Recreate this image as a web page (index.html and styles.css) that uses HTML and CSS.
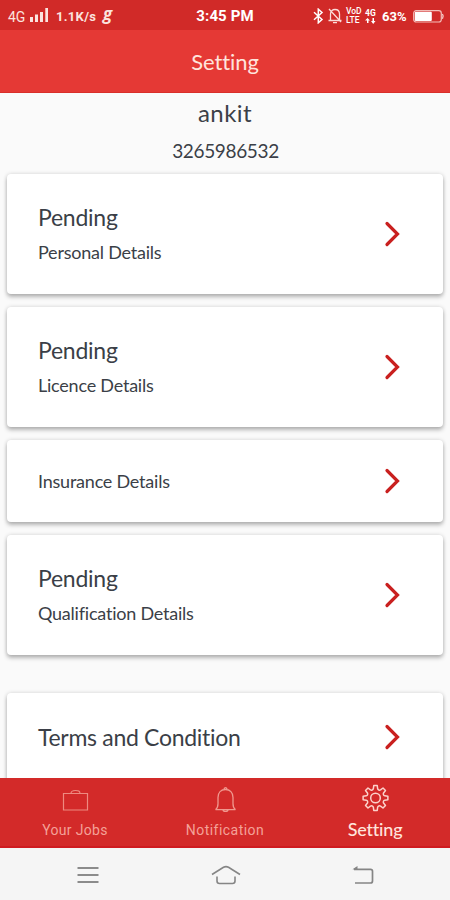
FILE: index.html
```html
<!DOCTYPE html>
<html lang="en">
<head>
<meta charset="utf-8">
<title>Setting</title>
<link rel="stylesheet" href="styles.css">
</head>
<body>
<div class="screen">
  <div class="status">
    <div class="status-left">
      <span class="net">4G</span>
      <svg class="bars" width="19" height="15" viewBox="0 0 19 15" fill="#fbe3df"><path d="M0 9h3v5H0zM5 6.500h3V14H5zM10 4h3v10h-3zM15.300 0h2.700v14h-2.700z"/></svg>
      <span class="speed">1.1K/s</span>
      <span class="g">g</span>
    </div>
    <div class="time">3:45 PM</div>
    <div class="status-right">
      <svg class="bt" width="11" height="16" viewBox="0 0 11 16" fill="none" stroke="#fff" stroke-width="1.500"><path d="M1 4.300l8 7.200-3.700 3.300V1.200L9 4.500l-8 7.200"/></svg>
      <svg class="mute" width="14" height="16" viewBox="0 0 14 16" fill="none" stroke="#fbdcd8" stroke-width="1.300"><path d="M2.500 12V6c0-3 2-4.500 4.500-4.500S11.500 3 11.500 6v6M.5 12.500h13M5 14.700h4M1 1l12 13"/></svg>
      <span class="stack volte"><span>VoD</span><span>LTE</span></span>
      <span class="stack data"><span>4G</span><svg width="11" height="6" viewBox="0 0 11 6" fill="#fff"><path d="M0 2.500L2.500 0 5 2.500H3.500V5H2V2.500zM6 3h1.500V0H9v3h1.500L8.200 6z"/></svg></span>
      <span class="pct">63%</span>
      <svg width="32" height="13" viewBox="0 0 32 13" fill="none"><rect x=".7" y=".7" width="27.600" height="11.300" rx="2.500" stroke="#f3bdb8" stroke-width="1.200"/><path d="M29.500 4q1.500 2.400 0 4.800" stroke="#fbdcd8" stroke-width="1.200"/><rect x="1.800" y="1.800" width="17" height="9.200" rx="1" fill="#fff"/></svg>
    </div>
  </div>
  <header class="header">Setting</header>
  <main class="content">
    <div class="name">ankit</div>
    <div class="phone">3265986532</div>
    <section class="cards">
      <div class="card"><div><div class="title">Pending</div><div class="sub">Personal Details</div></div><svg class="chev" viewBox="0 0 16 26"><path d="M3 2.500l10.500 10.500L3 23.500"/></svg></div>
      <div class="card"><div><div class="title">Pending</div><div class="sub">Licence Details</div></div><svg class="chev" viewBox="0 0 16 26"><path d="M3 2.500l10.500 10.500L3 23.500"/></svg></div>
      <div class="card short"><div class="sub">Insurance Details</div><svg class="chev" viewBox="0 0 16 26"><path d="M3 2.500l10.500 10.500L3 23.500"/></svg></div>
      <div class="card"><div><div class="title">Pending</div><div class="sub">Qualification Details</div></div><svg class="chev" viewBox="0 0 16 26"><path d="M3 2.500l10.500 10.500L3 23.500"/></svg></div>
      <div class="card terms"><div class="title wide">Terms and Condition</div><svg class="chev" viewBox="0 0 16 26"><path d="M3 2.500l10.500 10.500L3 23.500"/></svg></div>
    </section>
  </main>
  <nav class="tabs">
    <div class="tab">
      <svg width="28" height="28" viewBox="-14 -14 28 28" fill="none" stroke="#ee8a80" stroke-width="1.200"><path d="M-11.500-4.500h24v16.500h-24zM-4-4.500c0-2.500 1.500-3 4.500-3s4.500 .5 4.500 3"/></svg>
      <span>Your Jobs</span>
    </div>
    <div class="tab">
      <svg width="28" height="28" viewBox="-14 -14 28 28" fill="none" stroke="#f0988e" stroke-width="1.300"><g transform="translate(.5 1.500)"><path d="M-10 10.200h20M-10 10.200c2-1.500 2.500-3 2.500-6V-2c0-5 3-8 7.500-8s7.500 3 7.500 8v6.200c0 3 .5 4.500 2.500 6M-1.500-10c0-2.500 3-2.500 3 0M-2.500 10.500c.5 2 4.500 2 5 0"/></g></svg>
      <span class="notif">Notification</span>
    </div>
    <div class="tab active">
      <svg width="28" height="28" viewBox="-14 -14 28 28" fill="none" stroke="#fcd2cb" stroke-width="1.500" stroke-linejoin="round"><path transform="translate(.5 0)" d="M-2.140-9.260L-1.740-12.380H1.740L2.140-9.260A2 2 0 0 0 5.030-8.060L7.520-9.980 9.980-7.520 8.060-5.030A2 2 0 0 0 9.260-2.140L12.380-1.740V1.740L9.260 2.140A2 2 0 0 0 8.060 5.030L9.980 7.520 7.520 9.980 5.030 8.060A2 2 0 0 0 2.140 9.260L1.740 12.380H-1.740L-2.140 9.260A2 2 0 0 0-5.030 8.060L-7.520 9.980-9.980 7.520-8.060 5.030A2 2 0 0 0-9.260 2.140L-12.380 1.740V-1.740L-9.260-2.140A2 2 0 0 0-8.060-5.030L-9.980-7.520-7.520-9.980-5.030-8.060A2 2 0 0 0-2.140-9.260Z"/><circle cx=".5" r="4.800"/></svg>
      <span>Setting</span>
    </div>
  </nav>
  <div class="sysnav">
    <svg class="menu" width="22" height="18" viewBox="0 0 22 18" stroke="#8b8b8b" stroke-width="2"><path d="M.5 2h21M.5 9h21M.5 16h21"/></svg>
    <svg class="home" width="30" height="20" viewBox="0 0 30 20" fill="none" stroke="#858585" stroke-width="1.600"><path d="M1 9.500L12.500 2.300q2.500-1.300 5 0L29 9.500M6 11.500V16q0 2.500 2.500 2.500h13q2.500 0 2.500-2.500v-4.500"/></svg>
    <svg class="back" width="22" height="20" viewBox="0 0 22 20" fill="none" stroke="#858585" stroke-width="1.700"><path d="M2 4.300h16.500q2 0 2 2V16q0 2-2 2H3"/><path d="M.5 4.300L5.500 1v4z" fill="#858585" stroke="none"/></svg>
  </div>
</div>
</body>
</html>
```
FILE: styles.css
```css
* { box-sizing: border-box; }
body { margin: 0; font-family: Lato, sans-serif; color: #3b3f47; }
svg { display: block; flex: none; }
span, .title, .sub, .name, .phone, .time { white-space: nowrap; }
.screen { width: 450px; height: 900px; display: flex; flex-direction: column; overflow: hidden; background: #fafafa; }

.status { height: 30px; flex: none; background: #d12a28; color: #fff; font-family: Roboto, sans-serif; display: grid; grid-template-columns: 190px 70px 190px; align-items: center; padding-top: 2px; }
.status-left { display: flex; align-items: center; padding-left: 8px; color: #fbe3df; }
.net { width: 22px; font-size: 14px; padding-top: 2px; }
.bars { margin-top: -2px; }
.speed { width: 47px; margin-left: 7px; font-size: 13px; font-weight: 700; letter-spacing: .3px; }
.g { font: italic 700 17px/18px "Open Sans", sans-serif; margin-top: -4px; }
.time { text-align: center; font-size: 15px; font-weight: 700; letter-spacing: .1px; }
.status-right { display: flex; align-items: center; padding-left: 53px; }
.mute { margin-left: 4px; }
.stack { display: flex; flex-direction: column; font-size: 8.5px; line-height: 9px; font-weight: 500; }
.volte { width: 16px; margin-left: 4px; }
.volte span { height: 9px; }
.data { width: 13px; margin-left: 3px; font-weight: 700; }
.pct { width: 27px; margin: 0 4px; font-size: 13px; font-weight: 700; }

.header { height: 63px; flex: none; background: #e53935; border-bottom: 1px solid #d92f2a; color: #ffe4dc; font-size: 22px; line-height: 63px; text-align: center; font-variant-ligatures: none; letter-spacing: -.1px; }
.content { height: 685px; flex: none; overflow: hidden; }
.name { font-size: 24px; line-height: 30px; margin-top: 5px; text-align: center; letter-spacing: .4px; }
.phone { font-size: 19px; line-height: 24px; margin-top: 11px; text-align: center; letter-spacing: -.35px; padding-left: 1px; }
.cards { display: flex; flex-direction: column; gap: 13px; padding: 11px 7px 0; }
.card { height: 120px; flex: none; display: flex; align-items: center; justify-content: space-between; padding: 0 43px 0 31px; background: #fff; border-radius: 4px; box-shadow: 0 3px 4px rgba(0,0,0,.26), 0 0 4px rgba(0,0,0,.14); }
.short { height: 82px; }
.terms { height: 110px; margin-top: 25px; padding-bottom: 23px; }
.title { font-size: 23px; line-height: 30px; letter-spacing: -.25px; }
.card > .wide { letter-spacing: -.3px; margin-top: 1px; }
.sub { font-size: 18px; line-height: 24px; letter-spacing: -.22px; }
.title + .sub { margin-top: 8px; }
.card > div { margin-top: -2px; }
.card > .sub { margin-top: 0; }
.chev { width: 16px; height: 26px; fill: none; stroke: #c9201f; stroke-width: 3.200; stroke-linecap: round; }

.tabs { height: 70px; flex: none; display: grid; grid-template-columns: repeat(3, 1fr); background: #d32a29; border-bottom: 2px solid #cf1b20; color: #f4a198; font-family: Roboto, sans-serif; font-size: 14px; }
.tab { display: flex; flex-direction: column; align-items: center; padding-top: 6px; }
.tab span { line-height: 20px; margin-top: 8px; letter-spacing: .3px; }
.tab .notif { letter-spacing: .45px; }
.tab.active span { font: 500 18px/22px Lato, sans-serif; color: #ffe4dc; margin-top: 6px; letter-spacing: -.2px; }

.sysnav { height: 52px; flex: none; display: grid; grid-template-columns: 176px 98px 176px; align-items: center; justify-items: center; padding-top: 1px; background: #f5f5f5; }
.home, .back { margin-left: 2px; }
```
